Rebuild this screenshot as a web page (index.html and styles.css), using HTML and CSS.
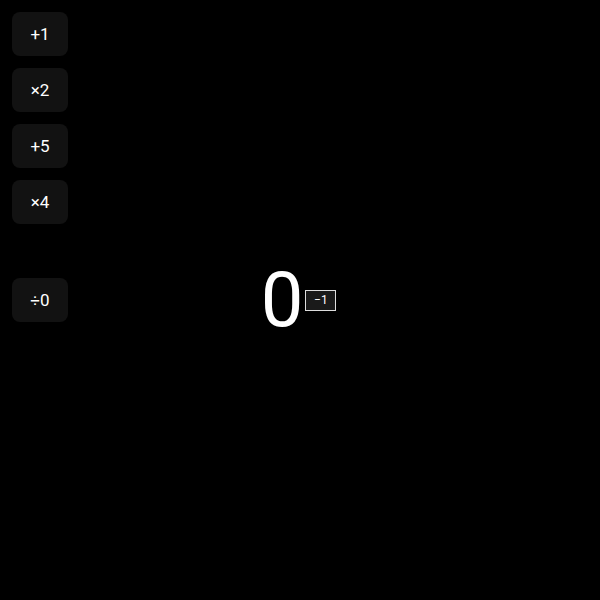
FILE: index.html
```html
<!DOCTYPE html>
<html>
<head>
<meta charset="utf-8">
<link rel="stylesheet" href="styles.css">
</head>
<body>
<div class="page">
  <div class="ops">
    <button class="op">+1</button>
    <button class="op">×2</button>
    <button class="op">+5</button>
    <button class="op">×4</button>
    <button class="op divide">÷0</button>
  </div>
  <div class="counter">
    <span class="value">0</span>
    <span class="undo">−1</span>
  </div>
  <div></div>
</div>
</body>
</html>
```
FILE: styles.css
```css
html, body {
  margin: 0;
  background: #000;
  height: 100%;
}
.page {
  display: grid;
  grid-template-columns: 1fr auto 1fr;
  height: 600px;
  font-family: Roboto, "Noto Sans", sans-serif;
  color: #fff;
}
.ops {
  display: flex;
  flex-direction: column;
  gap: 12px;
  padding: 12px;
  align-items: flex-start;
}
.op {
  width: 56px;
  height: 44px;
  border: none;
  border-radius: 8px;
  background: #121212;
  color: #fff;
  font-family: Roboto, "Noto Sans", sans-serif;
  font-size: 17px;
  padding: 0;
}
.divide {
  margin-top: 42px;
}
.counter {
  display: flex;
  align-items: center;
  gap: 2px;
  padding-right: 3px;
}
.value {
  font-size: 76px;
  line-height: 1;
}
.undo {
  border: 1px solid #ddd;
  background: #1a1a1a;
  color: #fff;
  font-size: 12px;
  display: flex;
  align-items: center;
  justify-content: center;
  box-sizing: border-box;
  width: 31px;
  height: 21px;
}
```
